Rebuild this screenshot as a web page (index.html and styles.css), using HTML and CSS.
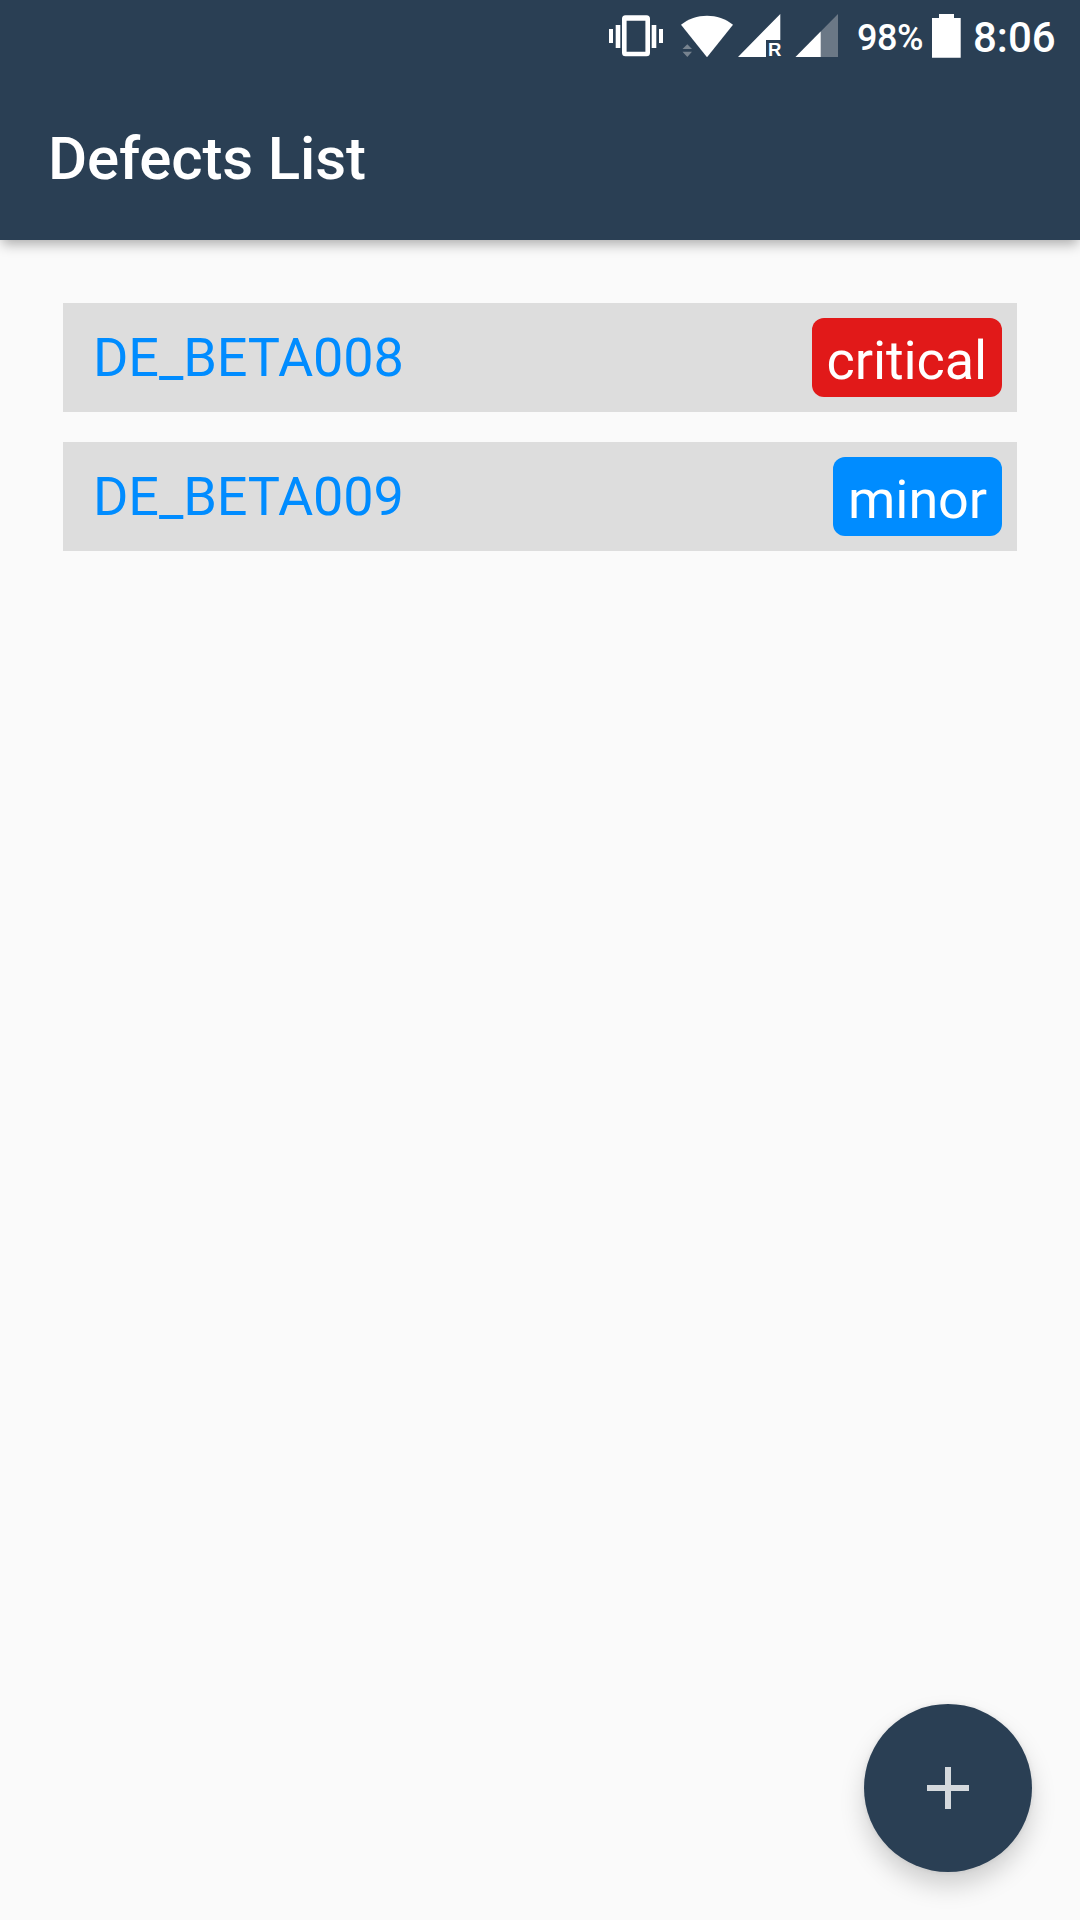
FILE: index.html
```html
<!DOCTYPE html>
<html lang="en">
<head>
  <meta charset="UTF-8" />
  <meta name="viewport" content="width=device-width, initial-scale=1.0"/>
  <title>Defects List</title>
  <link rel="stylesheet" href="styles.css">
</head>
<body>
<header class="app-bar">
  <div class="status-bar">
    <svg class="icon-vibrate" width="54" height="44" viewBox="0 0 54 44" fill="#fff">
      <path d="M0 15h4v14H0zM6.700 11h4.600v23H6.700zM42.700 11h4.600v23h-4.600zM50 15h4v14h-4z"/>
      <path fill-rule="evenodd" d="M16.500 1.300h21a3.500 3.500 0 0 1 3.500 3.500v34a3.500 3.500 0 0 1-3.500 3.500h-21a3.500 3.500 0 0 1-3.500-3.500v-34a3.500 3.500 0 0 1 3.500-3.500zM17.600 6.800v31h18.800v-31z"/>
    </svg>
    <svg class="icon-wifi" width="52" height="44" viewBox="0 0 52 44" fill="#fff">
      <path d="M26 43.300L0 10.700C7.500 4.800 16.500 1.700 26 1.700s18.500 3.100 26 9z"/>
      <path fill="#77838f" d="M1.500 35L6.300 30.200 11 35zM1.500 37.800H11L6.300 43z"/>
    </svg>
    <svg class="icon-signal" width="43" height="44" viewBox="0 0 43 44" fill="#fff">
      <path d="M42.300 0v26H28v17H0z"/>
      <text class="roaming" x="30" y="42.300">R</text>
    </svg>
    <svg class="icon-signal-low" width="43" height="44" viewBox="0 0 43 44">
      <path fill="#6b7886" d="M43 0v43H0.500z"/>
      <path fill="#fff" d="M25.700 17.600V43H0.500z"/>
    </svg>
    <span class="battery-level">98%</span>
    <svg class="icon-battery" width="29" height="44" viewBox="0 0 29 44" fill="#fff">
      <path d="M7 0h15v4h6.700v39.700H0V4h7z"/>
    </svg>
    <span class="clock">8:06</span>
  </div>
  <h1 class="title">Defects List</h1>
</header>
<main class="defects">
  <div class="defect">
    <span class="defect-name">DE_BETA008</span>
    <span class="badge critical">critical</span>
  </div>
  <div class="defect">
    <span class="defect-name">DE_BETA009</span>
    <span class="badge minor">minor</span>
  </div>
</main>
<button class="add-button" aria-label="Add defect">
  <svg width="42" height="42" viewBox="0 0 42 42" fill="#d4d9dd">
    <path d="M18 0h6v18h18v6H24v18h-6V24H0v-6h18z"/>
  </svg>
</button>
</body>
</html>
```
FILE: styles.css
```css
:root {
  --primary: #2A3F54;
  --blue: #008CFF;
  --red: #E11919;
}
* {
  box-sizing: border-box;
}
body {
  margin: 0;
  min-height: 100vh;
  background: #FAFAFA;
  font-family: Roboto, sans-serif;
}
.app-bar {
  height: 240px;
  background: var(--primary);
  color: #fff;
  box-shadow: 0 6px 12px -2px rgba(0,0,0,0.32);
}
.status-bar {
  display: flex;
  justify-content: flex-end;
  align-items: flex-start;
  height: 72px;
  padding: 14px 24px 0 0;
  font-weight: 500;
}
.status-bar svg {
  flex: none;
  overflow: visible;
}
.icon-wifi {
  margin-left: 18px;
}
.icon-signal {
  margin-left: 5px;
}
.icon-signal-low {
  margin-left: 14px;
}
.roaming {
  font-family: "Liberation Sans", Arial, sans-serif;
  font-size: 18.5px;
  font-weight: 700;
  letter-spacing: -0.5px;
}
.battery-level {
  width: 75px;
  margin-left: 19px;
  font-size: 36px;
  line-height: 48px;
  letter-spacing: -0.5px;
}
.clock {
  width: 83px;
  margin-left: 12px;
  font-size: 42px;
  line-height: 48px;
}
.title {
  margin: 0;
  padding: 5px 48px 0;
  font-size: 60px;
  font-weight: 500;
  line-height: 164px;
  letter-spacing: -0.15px;
}
.defects {
  display: flex;
  flex-direction: column;
  gap: 30px;
  padding: 63px;
}
.defect {
  display: flex;
  justify-content: space-between;
  align-items: center;
  height: 109px;
  padding: 0 15px 0 30px;
  background: #DDDDDD;
  font-size: 54px;
  letter-spacing: -0.1px;
}
.defect-name {
  color: var(--blue);
}
.badge {
  height: 79px;
  padding: 6px 15px 0;
  border-radius: 12px;
  color: #fff;
  line-height: 73px;
}
.critical {
  background: var(--red);
}
.minor {
  background: var(--blue);
}
.add-button {
  position: fixed;
  right: 48px;
  bottom: 48px;
  display: flex;
  align-items: center;
  justify-content: center;
  width: 168px;
  height: 168px;
  padding: 0;
  border: none;
  border-radius: 50%;
  background: var(--primary);
  box-shadow: 0 14px 24px rgba(0,0,0,0.17), 0 0 6px rgba(0,0,0,0.08);
}
```
